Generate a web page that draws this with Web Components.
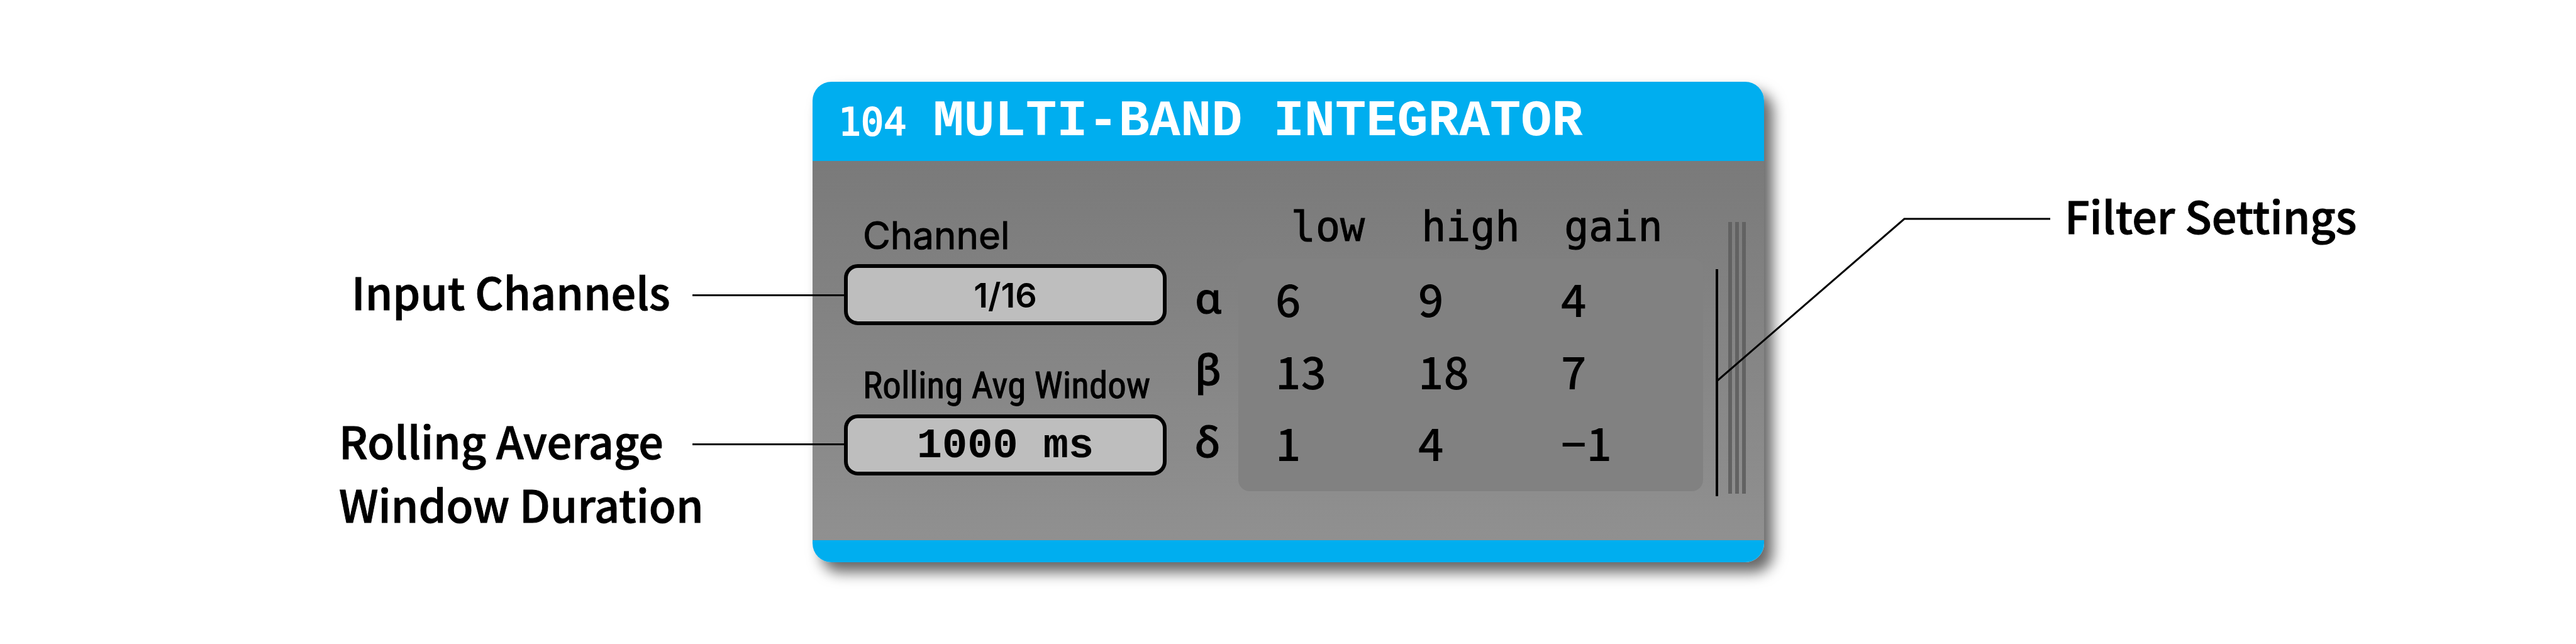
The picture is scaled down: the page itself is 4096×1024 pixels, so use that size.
<!DOCTYPE html>
<html lang="en">
<head>
<meta charset="utf-8">
<title>Multi-Band Integrator</title>
<style>
  body { margin: 0; background: #fff; color: #000; }
</style>
</head>
<body>
<annotated-figure>
  <callout-label slot="left" indent>Input Channels</callout-label>
  <callout-label slot="left">Rolling Average<br>Window Duration</callout-label>
  <plugin-editor number="104" name="MULTI-BAND INTEGRATOR">
    <div slot="fields">
      <param-field label="Channel" value="1/16"></param-field>
      <param-field label="Rolling Avg Window" value="1000 ms" mono narrow></param-field>
    </div>
    <band-table slot="table"></band-table>
  </plugin-editor>
  <filter-callout slot="right">Filter Settings</filter-callout>
</annotated-figure>
<script>
class BaseElement extends HTMLElement {
  connectedCallback() {
    if (!this.shadowRoot) this.attachShadow({ mode: 'open' }).innerHTML = this.render();
  }
}

customElements.define('annotated-figure', class extends BaseElement {
  render() {
    return `<style>
      :host { display: grid; grid-template-columns: 1292fr 1513fr 1291fr; padding: 130px 0; }
      .left { display: flex; flex-direction: column; gap: 136px; padding: 282px 0 0 539px; position: relative; z-index: 1; }
      .right { position: relative; z-index: 1; }
    </style>
    <div class="left"><slot name="left"></slot></div>
    <slot></slot>
    <div class="right"><slot name="right"></slot></div>`;
  }
});

customElements.define('callout-label', class extends BaseElement {
  render() {
    return `<style>
      :host { display: flex; align-items: flex-start; margin-right: -52px;
        font: 500 70px/101px "Noto Sans CJK JP", "Noto Sans", sans-serif; -webkit-text-stroke: 1px #000; }
      .text { flex: 0 0 562px; min-width: 0; box-sizing: border-box; white-space: nowrap; }
      :host([indent]) .text { padding-left: 20px; }
      .line { flex: 1; height: 3px; margin-top: 56px; background: #000; }
    </style>
    <div class="text"><slot></slot></div><div class="line"></div>`;
  }
});

customElements.define('filter-callout', class extends BaseElement {
  render() {
    return `<style>
      :host { display: block; padding: 161px 0 0 478px; -webkit-text-stroke: 1px #000;
        font: 500 70px/101px "Noto Sans CJK JP", "Noto Sans", sans-serif; white-space: nowrap; }
      svg { position: absolute; left: -80px; top: 210px; width: 540px; height: 460px; overflow: visible; }
    </style>
    <svg viewBox="0 0 540 460" fill="none" stroke="#000" stroke-width="3" aria-hidden="true">
      <path d="M5 88V449" stroke-width="4"/><path d="M6 265L303 8H535"/>
    </svg>
    <slot></slot>`;
  }
});

customElements.define('plugin-editor', class extends BaseElement {
  render() {
    return `<style>
      :host { display: flex; flex-direction: column; border-radius: 30px; overflow: hidden;
        box-shadow: 14px 16px 22px rgba(0,0,0,.6); }
      header { display: flex; align-items: baseline; gap: 42px; box-sizing: border-box; height: 126px;
        padding: 18px 41px 0; background: #00aeef; color: #fff; white-space: nowrap; line-height: 92px; }
      .num { font-family: "DejaVu Sans Mono", monospace; font-size: 60px; -webkit-text-stroke: 2px #fff; }
      h1 { margin: 0; font-family: "Liberation Mono", monospace; font-size: 82px; font-weight: 700; }
      .body { display: flex; align-items: flex-start; padding: 81px 29px 74px 50px;
        background: linear-gradient(#7a7a7a, #909090); }
      .fields { flex: 0 0 513px; min-width: 0; }
      .table { flex: 1; }
      .grip { width: 28px; height: 432px; margin: 16px 0 0 40px;
        background: repeating-linear-gradient(90deg, #626262 0 6px, transparent 6px 11px); }
      footer { height: 35px; background: #00aeef; }
    </style>
    <header><span class="num">${this.getAttribute('number')}</span><h1>${this.getAttribute('name')}</h1></header>
    <div class="body">
      <div class="fields"><slot name="fields"></slot></div>
      <div class="table"><slot name="table"></slot></div>
      <div class="grip"></div>
    </div>
    <footer></footer>`;
  }
});

customElements.define('param-field', class extends BaseElement {
  render() {
    return `<style>
      :host { display: block; }
      :host(:not(:last-child)) { margin-bottom: 59px; }
      label { display: block; padding: 2px 0 11px 30px; white-space: nowrap;
        font: 400 60px/70px Inter, sans-serif; -webkit-text-stroke: 1px #000; }
      :host([narrow]) label { font-family: "Roboto Condensed", "Liberation Sans Narrow", Lato, sans-serif; font-size: 59px; }
      input { display: block; box-sizing: border-box; width: 100%; height: 97px; padding: 2px 0 0; margin: 0;
        border: 6px solid #000; border-radius: 22px; background: #bebebe; color: #000; text-align: center;
        font: 600 54px/80px Inter, sans-serif; }
      :host([mono]) input { font: 700 67px/80px "Liberation Mono", monospace; }
    </style>
    <label for="f">${this.getAttribute('label')}</label>
    <input id="f" type="text" value="${this.getAttribute('value')}">`;
  }
});

customElements.define('band-table', class extends BaseElement {
  render() {
    const rows = [['α', '6', '9', '4'], ['β', '13', '18', '7'], ['δ', '1', '4', '−1']];
    return `<style>
      :host { display: block; }
      table { width: 100%; border-collapse: separate; border-spacing: 0; table-layout: fixed; }
      th, td { padding: 0; font: 500 71px/74px "Noto Sans CJK JP", "Noto Sans", sans-serif; text-align: left; }
      thead th { height: 74px; box-sizing: border-box; padding-bottom: 26px; text-align: center; line-height: 48px;
        font-family: "DejaVu Sans Mono", monospace; font-size: 65px; font-weight: 400; -webkit-text-stroke: 1px #000; }
      tbody th { padding: 12px 0 28px 45px; font-family: "Noto Sans", sans-serif; font-size: 68px; -webkit-text-stroke: 1px #000; }
      td { padding: 14px 0 26px 30px; background: #818181; }
      th:nth-child(2) { padding-left: 29px; }
      td:nth-child(2) { padding-left: 59px; }
      thead th:last-child { padding-right: 29px; }
      tbody tr:first-child > * { padding-top: 24px; }
      tbody tr:last-child > * { padding-bottom: 42px; }
      tr:first-child td:nth-child(2) { border-top-left-radius: 18px; }
      tr:first-child td:last-child { border-top-right-radius: 18px; }
      tr:last-child td:nth-child(2) { border-bottom-left-radius: 18px; }
      tr:last-child td:last-child { border-bottom-right-radius: 18px; }
      .g { width: 114px; } .a { width: 256px; } .b { width: 227px; }
    </style>
    <table>
      <colgroup><col class="g"><col class="a"><col class="b"><col></colgroup>
      <thead><tr><th></th><th scope="col">low</th><th scope="col">high</th><th scope="col">gain</th></tr></thead>
      <tbody>${rows.map(([g, ...v]) => `<tr><th scope="row">${g}</th>${v.map(n => `<td>${n}</td>`).join('')}</tr>`).join('')}</tbody>
    </table>`;
  }
});
</script>
</body>
</html>
